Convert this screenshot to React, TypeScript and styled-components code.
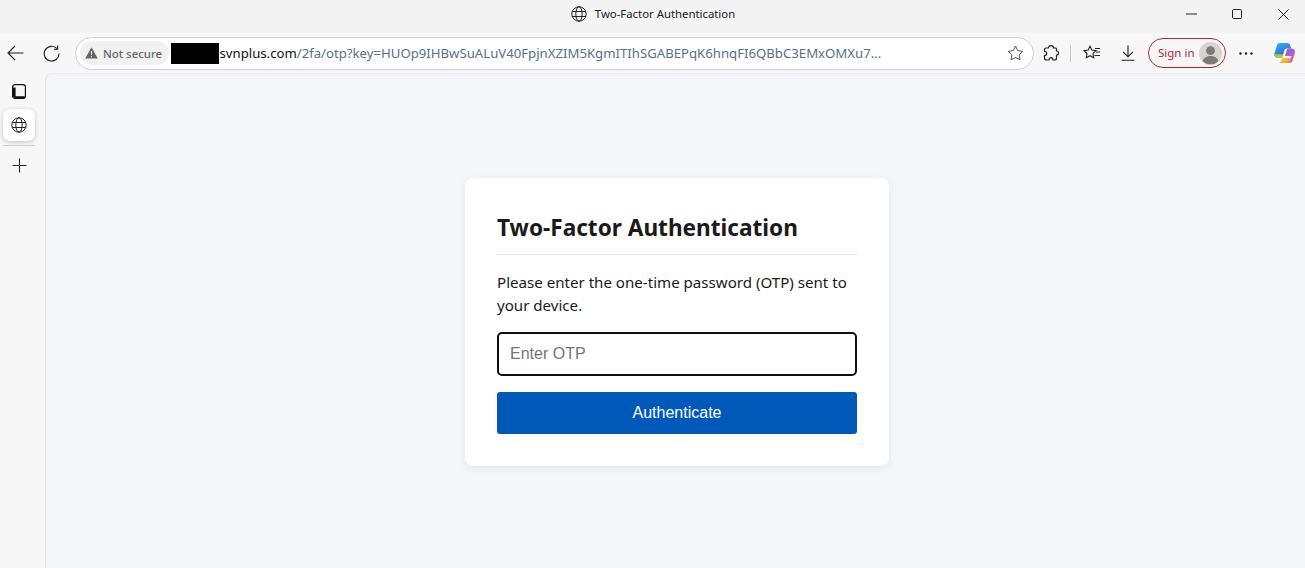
import { createGlobalStyle, styled } from 'styled-components'

const GlobalStyle = createGlobalStyle`
  html, body {
    margin: 0;
    padding: 0;
    height: 100%;
    overflow: hidden;
    background: #f7f7f7;
  }
  #root {
    height: 100%;
  }
  * {
    box-sizing: border-box;
  }
`

const UI_FONT = `"Noto Sans", "Open Sans", sans-serif`

const Browser = styled.div`
  height: 568px;
  display: flex;
  flex-direction: column;
  font-family: ${UI_FONT};
`

const TitleBar = styled.div`
  height: 33px;
  flex: none;
  background: #f3f3f3;
  display: grid;
  grid-template-columns: 1fr auto 1fr;
  align-items: start;
`

const TitleCenter = styled.div`
  grid-column: 2;
  height: 27px;
  margin-left: 1px;
  display: flex;
  align-items: center;
  gap: 8px;
  font-size: 11.35px;
  color: #222;
`

const WindowControls = styled.div`
  grid-column: 3;
  justify-self: end;
  display: flex;
  margin-right: -1px;
`

const WindowButton = styled.div`
  width: 46px;
  height: 28px;
  display: flex;
  align-items: center;
  justify-content: center;
`

const Toolbar = styled.div`
  height: 40px;
  flex: none;
  display: flex;
  align-items: center;
  background: #f7f7f7;
`

const IconSlot = styled.div<{ $w: number; $ml?: number }>`
  width: ${(p) => p.$w}px;
  height: 30px;
  flex: none;
  margin-left: ${(p) => p.$ml ?? 0}px;
  display: flex;
  align-items: center;
  justify-content: center;
`

const AddressBar = styled.div`
  width: 959px;
  height: 33px;
  margin-left: 9px;
  flex: none;
  background: #fff;
  border: 1px solid #cfcfcf;
  border-radius: 17px;
  display: flex;
  align-items: center;
  padding-left: 4px;
`

const SecurityChip = styled.div`
  width: 89px;
  height: 24px;
  flex: none;
  border-radius: 12px;
  background: #f1f1f1;
  display: flex;
  align-items: center;
  gap: 5px;
  padding-left: 5px;
  font-size: 11.4px;
  font-weight: 500;
  color: #676767;
`

const Redaction = styled.div`
  width: 48px;
  height: 21px;
  margin-left: 2px;
  flex: none;
  position: relative;
  z-index: 1;
  background: #000;
`

const UrlText = styled.div`
  flex: 1;
  margin-left: -3px;
  font-size: 13.18px;
  white-space: nowrap;
  color: #56708f;
`

const UrlHost = styled.span`
  color: #111;
`

const Separator = styled.div`
  width: 1px;
  height: 17px;
  margin-left: 5px;
  flex: none;
  background: #c9c9c9;
`

const SignIn = styled.div`
  width: 78px;
  height: 30px;
  margin-left: 5px;
  flex: none;
  border: 1px solid #b3282d;
  border-radius: 15px;
  display: flex;
  align-items: center;
  justify-content: space-between;
  padding: 0 3px 0 9px;
  font-size: 11.5px;
  color: #b3282d;
`

const SignInLabel = styled.span`
  margin-top: -2px;
`

const Body = styled.div`
  flex: 1;
  display: flex;
  min-height: 0;
`

const Sidebar = styled.div`
  width: 45px;
  flex: none;
  padding: 3px 0 0 3px;
  display: flex;
  flex-direction: column;
`

const SideIcon = styled.div`
  width: 32px;
  height: 30px;
  display: flex;
  align-items: center;
  justify-content: center;
`

const ActiveTab = styled(SideIcon)`
  height: 32px;
  margin-top: 3px;
  background: #fff;
  border-radius: 7px;
  box-shadow: 0 1px 4px rgba(0, 0, 0, 0.22);
`

const SideDivider = styled.div`
  width: 32px;
  height: 1px;
  margin: 4px 0 4px;
  background: #cfcfcf;
`

const Content = styled.main`
  flex: 1;
  background: #f5f6fa;
  border-top: 1px solid #ececec;
  border-left: 1px solid #e4e4e4;
  border-top-left-radius: 8px;
  display: flex;
  justify-content: center;
  padding: 104px 0 0 3px;
`

const Card = styled.section`
  width: 424px;
  height: 288px;
  padding: 32px;
  background: #fff;
  border-radius: 8px;
  box-shadow: 0 2px 8px rgba(0, 0, 0, 0.07);
`

const Heading = styled.h1`
  margin: 0 0 16px;
  border-bottom: 1px solid #e2e5ec;
  font-size: 22.6px;
  line-height: 36px;
  height: 45px;
  font-weight: 700;
  color: #1a1a1a;
`

const Intro = styled.p`
  margin: 0 0 15px;
  font-size: 15.1px;
  line-height: 23px;
  color: #1a1a1a;
`

const OtpInput = styled.input`
  display: block;
  width: 100%;
  height: 44px;
  padding: 0 11px;
  margin-bottom: 16px;
  background: #fff;
  border: 2px solid #101010;
  border-radius: 5px;
  outline: none;
  font-family: "Liberation Sans", Arial, sans-serif;
  font-size: 16px;

  &::placeholder {
    color: #757575;
    opacity: 1;
  }
`

const SubmitButton = styled.button`
  display: block;
  width: 100%;
  height: 42px;
  border: none;
  border-radius: 3px;
  background: #0059b8;
  color: #fff;
  font-family: "Liberation Sans", Arial, sans-serif;
  font-size: 16px;
`

const Globe = ({ size, color = '#222' }: { size: number; color?: string }) => (
  <svg width={size} height={size} viewBox="0 0 16 16" fill="none" stroke={color} strokeWidth="1">
    <circle cx="8" cy="8" r="7.2" />
    <ellipse cx="8" cy="8" rx="3.2" ry="7.2" />
    <path d="M1.2 5.5h13.6M1.2 10.5h13.6" />
  </svg>
)

const App = () => (
  <Browser>
    <GlobalStyle />
    <TitleBar>
      <TitleCenter>
        <Globe size={16} />
        Two-Factor Authentication
      </TitleCenter>
      <WindowControls>
        <WindowButton>
          <svg width="11" height="2" viewBox="0 0 11 2">
            <path d="M0 1h11" stroke="#222" />
          </svg>
        </WindowButton>
        <WindowButton>
          <svg width="10" height="10" viewBox="0 0 10 10" fill="none">
            <rect x="0.5" y="0.5" width="9" height="9" rx="1.2" stroke="#222" />
          </svg>
        </WindowButton>
        <WindowButton>
          <svg width="11" height="11" viewBox="0 0 11 11">
            <path d="M0.5 0.5l10 10M10.5 0.5l-10 10" stroke="#222" />
          </svg>
        </WindowButton>
      </WindowControls>
    </TitleBar>
    <Toolbar>
      <IconSlot $w={30}>
        <svg width="17" height="16" viewBox="0 0 17 16" fill="none" stroke="#222" strokeWidth="1.15">
          <path d="M16.5 8H1M8 1L1 8l7 7" />
        </svg>
      </IconSlot>
      <IconSlot $w={30} $ml={6}>
        <svg width="17" height="17" viewBox="0 0 17 17" fill="none" stroke="#222" strokeWidth="1.15">
          <path d="M14 3.6A7.4 7.4 0 1 0 16 8.5" />
          <path d="M14.6 0.6v3.6h-3.6" />
        </svg>
      </IconSlot>
      <AddressBar>
        <SecurityChip>
          <svg width="13" height="12" viewBox="0 0 13 12">
            <path d="M6.5 0.3L12.8 11.6H0.2z" fill="#666" />
            <path d="M6.5 4v4M6.5 9v1.3" stroke="#f1f1f1" strokeWidth="1.1" />
          </svg>
          Not secure
        </SecurityChip>
        <Redaction />
        <UrlText>
          <UrlHost>.svnplus.com</UrlHost>/2fa/otp?key=HUOp9IHBwSuALuV40FpjnXZIM5KgmITIhSGABEPqK6hnqFI6QBbC3EMxOMXu7...
        </UrlText>
        <IconSlot $w={30}>
          <svg width="17" height="16" viewBox="0 0 17 16" fill="none" stroke="#555" strokeWidth="1">
            <path d="M8.5 1l2.2 4.6 5 .7-3.6 3.5.9 5-4.5-2.4L4 14.8l.9-5L1.3 6.3l5-.7z" />
          </svg>
        </IconSlot>
        <IconSlot $w={3} />
      </AddressBar>
      <IconSlot $w={28} $ml={3}>
        <svg width="17" height="16" viewBox="0 0 17 16" fill="none" stroke="#222" strokeWidth="1.2" strokeLinejoin="round">
          <path d="M5.5 3C5.500 1.500 6.500 .7 8 .7S10.500 1.500 10.500 3H12.500Q13.500 3 13.500 4V6C15 6 15.500 7 15.500 8S15 10 13.500 10V13Q13.500 15 11.500 15H10C10 13.500 9.200 12.700 8 12.700S6 13.500 6 15H3.500Q1.500 15 1.500 13V10.500C3 10.500 3.700 9.700 3.700 8.500S3 6.500 1.500 6.500V4.500Q1.500 3 3 3Z" />
        </svg>
      </IconSlot>
      <Separator />
      <IconSlot $w={30} $ml={6}>
        <svg width="18" height="16" viewBox="0 0 18 16" fill="none" stroke="#222" strokeWidth="1.1">
          <path d="M7 1.200l1.800 3.800 4.200.6-3 2.900.7 4.200L7 10.700l-3.700 2 .7-4.200-3-2.900 4.200-.6z" />
          <path d="M12 3.500h5M13 7h4M11.500 10.500h5.500" />
        </svg>
      </IconSlot>
      <IconSlot $w={30} $ml={6}>
        <svg width="14" height="16" viewBox="0 0 14 16" fill="none" stroke="#222" strokeWidth="1.1">
          <path d="M7 0.500V11.500M2 6.800l5 5 5-5M0.500 15.300h13" />
        </svg>
      </IconSlot>
      <SignIn>
        <SignInLabel>Sign in</SignInLabel>
        <svg width="23" height="23" viewBox="0 0 24 24">
          <circle cx="12" cy="12" r="12" fill="#d6d3d0" />
          <circle cx="12" cy="9" r="4.600" fill="#7d7975" />
          <path d="M3.800 20c1-4 4.400-5.500 8.200-5.500s7.200 1.500 8.200 5.500a12 12 0 0 1-16.400 0z" fill="#7d7975" />
        </svg>
      </SignIn>
      <IconSlot $w={30} $ml={5}>
        <svg width="14" height="3" viewBox="0 0 14 3" fill="#222">
          <circle cx="1.500" cy="1.500" r="1.200" />
          <circle cx="7" cy="1.500" r="1.200" />
          <circle cx="12.500" cy="1.500" r="1.200" />
        </svg>
      </IconSlot>
      <IconSlot $w={26} $ml={10}>
        <svg width="23" height="22" viewBox="0 0 23 22">
          <defs>
            <linearGradient id="copilotA" x1="0.2" y1="0" x2="0.7" y2="1">
              <stop offset="0" stopColor="#2fb4e8" />
              <stop offset="1" stopColor="#3a4fd6" />
            </linearGradient>
            <linearGradient id="copilotB" x1="0" y1="0" x2="1" y2="1">
              <stop offset="0" stopColor="#5fce5a" />
              <stop offset="0.55" stopColor="#f4c63a" />
              <stop offset="1" stopColor="#f2803a" />
            </linearGradient>
            <linearGradient id="copilotC" x1="0.3" y1="0" x2="0.8" y2="1">
              <stop offset="0" stopColor="#8a5be8" />
              <stop offset="1" stopColor="#ef5fa8" />
            </linearGradient>
          </defs>
          <path d="M7 1h7.500c1.500 0 2.300 1 2.700 2.200l1 3.300H14c-1.500 0-2.400.8-2.800 2.200L9 16H5C2.500 16 .8 13.800 1.500 11.300L4 3.200C4.400 1.900 5.500 1 7 1z" fill="url(#copilotA)" />
          <path d="M1.500 11.300C.8 13.800 2.500 16 5 16h4l.7-2.200-1.300 4.500C7.900 20 6.800 21 5.200 21h8.800c2 0 3.400-1 4-2.800l.5-2.200H9.500l1-3.500L4 12z" fill="url(#copilotB)" />
          <path d="M14 6.500h4.500c2.500 0 4 2.300 3.400 4.600l-2.300 7.400c-.4 1.400-1.500 2.500-3.100 2.500h-2c1.500-.5 2.400-1.500 2.800-2.800l1.200-4.200h-6.500l1.600-5.300c.4-1.400 1-2.200 2.400-2.200z" fill="url(#copilotC)" />
        </svg>
      </IconSlot>
    </Toolbar>
    <Body>
      <Sidebar>
        <SideIcon>
          <svg width="14" height="15" viewBox="0 0 14 15" fill="none">
            <rect x="0.600" y="0.600" width="12.800" height="13.800" rx="2.500" stroke="#111" strokeWidth="1.200" />
            <path d="M1 3.500h2.600V12.200H13V14H3a2 2 0 0 1-2-2z" fill="#111" />
          </svg>
        </SideIcon>
        <ActiveTab>
          <Globe size={16} />
        </ActiveTab>
        <SideDivider />
        <SideIcon>
          <svg width="15" height="15" viewBox="0 0 15 15">
            <path d="M7.500 0.500v14M0.500 7.500h14" stroke="#222" strokeWidth="1.100" />
          </svg>
        </SideIcon>
      </Sidebar>
      <Content>
        <Card>
          <Heading>Two-Factor Authentication</Heading>
          <Intro>Please enter the one-time password (OTP) sent to your device.</Intro>
          <OtpInput placeholder="Enter OTP" />
          <SubmitButton>Authenticate</SubmitButton>
        </Card>
      </Content>
    </Body>
  </Browser>
)

export default App
